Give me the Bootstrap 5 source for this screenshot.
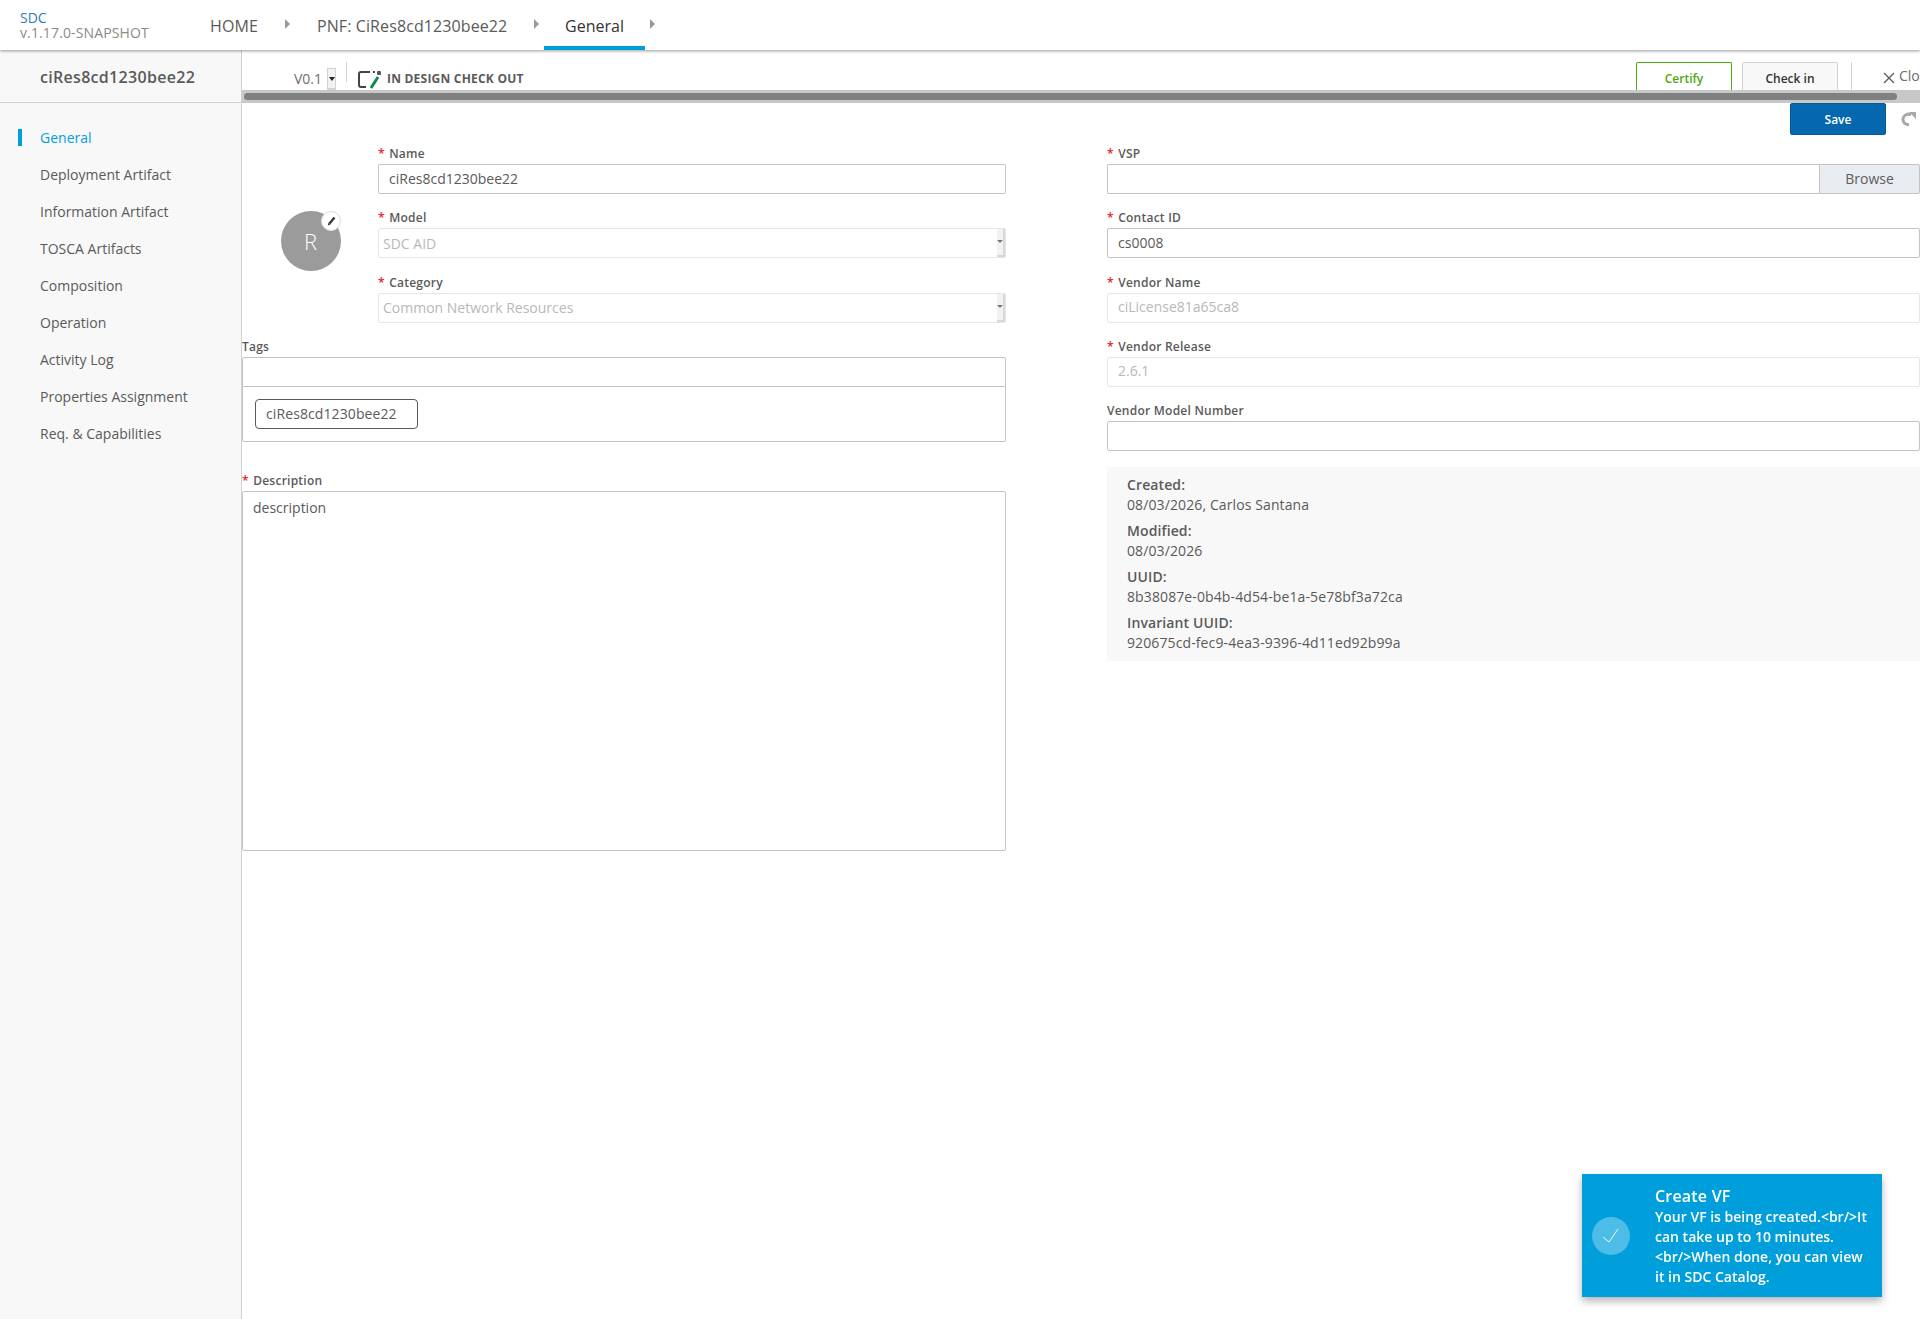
<!DOCTYPE html>
<html lang="en">
<head>
    <meta charset="UTF-8">
    <meta name="viewport" content="width=device-width, initial-scale=1.0">
    <title>SDC - General</title>
    <link href="https://cdn.jsdelivr.net/npm/bootstrap@5.3.0/dist/css/bootstrap.min.css" rel="stylesheet">
    <style>
        html, body { height: 100%; }
        body {
            font-family: "Open Sans", "Liberation Sans", sans-serif;
            font-size: 14px;
            color: #5a5a5a;
            overflow: hidden;
            background: #fff;
        }
        /* top bar */
        .top-bar {
            height: 50px;
            position: relative;
            z-index: 2;
            background: #fff;
            box-shadow: 0 1px 3px rgba(0, 0, 0, .4);
        }
        .brand-box { width: 190px; padding: 10px 0 0 20px; line-height: 15px; }
        .brand-name { color: #337ab7; font-size: 14px; line-height: 15px; }
        .brand-ver { color: #8a8a8a; font-size: 14px; letter-spacing: .13px; }
        .crumb {
            height: 50px;
            line-height: 52px;
            font-size: 16px;
            color: #5a5a5a;
            white-space: nowrap;
        }
        .crumb-home { width: 74px; margin-left: 20px; letter-spacing: .1px; }
        .crumb-pnf { width: 216px; margin-left: 25px; letter-spacing: .1px; }
        .crumb-on {
            width: 101px;
            margin-left: 3px;
            text-align: center;
            color: #333;
            border-bottom: 4px solid #009fdb;
        }
        .crumb-arrow { width: 8px; height: 12px; margin-top: 18px; }
        /* side nav */
        .side-nav {
            width: 242px;
            flex: none;
            background: #f8f8f8;
            border-right: 1px solid #d2d2d2;
        }
        .side-title {
            height: 53px;
            line-height: 54px;
            padding-left: 40px;
            font-size: 16px;
            font-weight: 600;
            letter-spacing: .3px;
            border-bottom: 1px solid #d2d2d2;
        }
        .side-list { padding-top: 16px; }
        .side-item { height: 37px; line-height: 37px; padding-left: 40px; position: relative; }
        .side-on { color: #009fdb; }
        .side-on::before {
            content: "";
            position: absolute;
            left: 18px;
            top: 10px;
            width: 4px;
            height: 17px;
            background: #009fdb;
        }
        /* toolbar */
        .main-area { flex: 1; min-width: 0; overflow: hidden; }
        .tool-row { height: 40px; padding-top: 12px; }
        .ver-text { margin-left: 52px; width: 33px; padding-top: 7px; line-height: 20px; color: #6d6d6d; }
        .ver-spin {
            width: 9px;
            height: 22px;
            margin-top: 6px;
            border: 1px solid #d2d2d2;
            border-bottom-width: 2px;
            background: #f2f2f2;
            position: relative;
        }
        .tri-down {
            position: absolute;
            left: 1px;
            top: 8px;
            border: 3px solid transparent;
            border-top: 4px solid #222;
            border-bottom: 0;
        }
        .tool-sep { width: 1px; background: #d2d2d2; height: 20px; margin: 0 10px; }
        .state-icon { margin-top: 8px; flex: none; }
        .state-text { font-size: 12px; font-weight: 700; letter-spacing: .22px; color: #5a5a5a; padding-top: 8px; line-height: 18px; margin-left: 5px; white-space: nowrap; }
        .btn-certify, .btn-checkin {
            width: 96px;
            height: 28px;
            font-size: 12px;
            font-weight: 600;
            text-align: center;
            line-height: 32px;
            border-radius: 2px 2px 0 0;
        }
        .btn-certify { color: #4ca90c; border: 1px solid #4ca90c; border-bottom: 0; background: #fff; }
        .btn-checkin { color: #333; border: 1px solid #d2d2d2; border-bottom: 0; background: #f8f8f8; margin-left: 10px; }
        .close-box { width: 69px; margin-left: 13px; border-left: 1px solid #d2d2d2; height: 28px; white-space: nowrap; overflow: hidden; padding-left: 47px; line-height: 28px; color: #6d6d6d; position: relative; }
        .close-x { position: absolute; left: 31px; top: 10px; }
        .scroll-track { height: 13px; background: #c8c8c8; padding: 3px 23px 0 2px; }
        .scroll-thumb { height: 6.5px; background: #7f8080; border-radius: 4px; }
        .save-row { height: 32px; position: relative; }
        .btn-save {
            width: 96px;
            height: 32px;
            padding: 2px 0 0;
            font-size: 12px;
            font-weight: 600;
            color: #fff;
            background: #0568ae;
            border: 1px solid #045c9c;
            border-radius: 2px;
            margin-right: 34px;
        }
        .redo-icon { position: absolute; right: 4px; top: 9px; }
        /* form */
        .form-wrap { margin-top: 9px; width: 1700px; }
        .left-side { width: 764px; flex: none; }
        .right-side { width: 813px; margin-left: 101px; flex: none; }
        .field-box { margin-bottom: 14.25px; }
        .field-lbl {
            display: block;
            font-size: 12px;
            font-weight: 600;
            letter-spacing: .24px;
            line-height: 18px;
            padding-top: 1px;
            height: 18px;
            margin-bottom: 2px;
            color: #5a5a5a;
        }
        .req { color: #e81b1b; margin-right: 1px; }
        .txt-input {
            height: 30px;
            padding: 0 10px 2px;
            font-size: 14px;
            color: #5a5a5a;
            border: 1px solid #c4c4c4;
            border-radius: 2px;
        }
        .txt-input:disabled {
            background: #fff;
            color: #b8b8b8;
            border-color: #e6e6e6;
            opacity: 1;
        }
        .sel-input { padding: 0 0 0 4px; }
        .sel-spin {
            position: absolute;
            right: 1px;
            top: 1px;
            width: 8px;
            height: 28px;
            background: #f2f2f2;
            border-right: 2px solid #d8d8d8;
            border-bottom: 2px solid #d8d8d8;
        }
        .sel-spin .tri-down { left: 0; top: 11px; border-width: 3px 3px 0; border-color: #777 transparent transparent; }
        .avatar-col { width: 136px; flex: none; padding: 67px 0 0 39px; }
        .avatar-round {
            width: 60px;
            height: 60px;
            border-radius: 50%;
            background: #9b9b9b;
            color: #fff;
            font-size: 22px;
            font-weight: 300;
            line-height: 60px;
            padding-right: 1px;
            text-align: center;
            position: relative;
        }
        .avatar-edit {
            position: absolute;
            right: 0;
            top: 0;
            width: 20px;
            height: 20px;
            border-radius: 50%;
            background: #fff;
            border: 1px solid #ddd;
            display: flex;
            align-items: center;
            justify-content: center;
        }
        .name-fields { width: 628px; flex: none; }
        .tags-list { height: 55px; border: 1px solid #c4c4c4; border-top: 0; border-radius: 0 0 2px 2px; padding: 12px 0 0 12px; margin-bottom: 29px; }
        .tag-chip {
            display: inline-block;
            width: 163px;
            height: 30px;
            line-height: 28px;
            padding-left: 10px;
            letter-spacing: .1px;
            border: 1px solid #5a5a5a;
            border-radius: 4px;
        }
        .desc-area { height: 360px; padding: 6px 10px; border: 1px solid #c4c4c4; border-radius: 2px; color: #5a5a5a; font-size: 14px; resize: none; line-height: 20px; }
        .browse-btn {
            width: 101px;
            height: 30px;
            padding: 0 0 2px;
            font-size: 14px;
            color: #5a5a5a;
            background: #e9edf2;
            border: 1px solid #c4c4c4;
            border-radius: 0 2px 2px 0;
        }
        .info-panel { margin-top: 16px; height: 194px; padding: 8px 20px; background: #f8f8f8; line-height: 20px; letter-spacing: .11px; }
        .info-group { margin-bottom: 6px; }
        .info-head { font-weight: 600; }
        /* toast */
        .vf-toast {
            position: fixed;
            left: 1582px;
            top: 1174px;
            width: 300px;
            height: 123px;
            padding: 11px 8px 0 73px;
            background: #009fdb;
            color: #fff;
            box-shadow: 0 4px 8px rgba(0, 0, 0, .3);
            line-height: 20px;
            font-weight: 600;
        }
        .vf-toast-title { font-size: 16px; font-weight: 600; letter-spacing: .2px; line-height: 22px; }
        .vf-check {
            position: absolute;
            left: 10px;
            top: 43px;
            width: 38px;
            height: 38px;
            border-radius: 50%;
            background: rgba(255, 255, 255, .3);
            display: flex;
            align-items: center;
            justify-content: center;
        }
    </style>
</head>

<body class="d-flex flex-column">
    <!-- top bar with breadcrumb -->
    <div class="top-bar d-flex flex-none">
        <div class="brand-box">
            <div class="brand-name">SDC</div>
            <div class="brand-ver">v.1.17.0-SNAPSHOT</div>
        </div>
        <div class="crumb crumb-home">HOME</div>
        <svg class="crumb-arrow" viewBox="0 0 8 12"><path d="M1 1 L6 6 L1 11 Z" fill="#999"/></svg>
        <div class="crumb crumb-pnf">PNF: CiRes8cd1230bee22</div>
        <svg class="crumb-arrow" viewBox="0 0 8 12"><path d="M1 1 L6 6 L1 11 Z" fill="#999"/></svg>
        <div class="crumb crumb-on">General</div>
        <svg class="crumb-arrow ms-1" viewBox="0 0 8 12"><path d="M1 1 L6 6 L1 11 Z" fill="#999"/></svg>
    </div>

    <div class="d-flex flex-grow-1" style="min-height:0">
        <!-- side nav -->
        <div class="side-nav">
            <div class="side-title">ciRes8cd1230bee22</div>
            <div class="side-list">
                <div class="side-item side-on">General</div>
                <div class="side-item">Deployment Artifact</div>
                <div class="side-item">Information Artifact</div>
                <div class="side-item">TOSCA Artifacts</div>
                <div class="side-item">Composition</div>
                <div class="side-item">Operation</div>
                <div class="side-item">Activity Log</div>
                <div class="side-item">Properties Assignment</div>
                <div class="side-item">Req. &amp; Capabilities</div>
            </div>
        </div>

        <div class="main-area">
            <!-- version and lifecycle toolbar -->
            <div class="tool-row d-flex">
                <div class="ver-text">V0.1</div>
                <div class="ver-spin"><span class="tri-down"></span></div>
                <div class="tool-sep"></div>
                <svg class="state-icon" width="25" height="19" viewBox="0 0 25 19">
                    <path d="M13 2 H4 Q2 2 2 4 V15 Q2 17 4 17 H9 M16 2 H17 V3" fill="none" stroke="#444" stroke-width="2"/>
                    <rect x="20" y="1" width="4" height="4" rx="1" fill="#555"/>
                    <path d="M21 7 L14 18" stroke="#0f8a4a" stroke-width="3"/>
                </svg>
                <div class="state-text">IN DESIGN CHECK OUT</div>
                <div class="ms-auto d-flex">
                    <div class="btn-certify">Certify</div>
                    <div class="btn-checkin">Check in</div>
                    <div class="close-box">
                        <svg class="close-x" width="12" height="12" viewBox="0 0 12 12"><path d="M1 1 L11 11 M11 1 L1 11" stroke="#5a5a5a" stroke-width="1.3"/></svg>
                        <span>Clo</span>
                    </div>
                </div>
            </div>
            <div class="scroll-track"><div class="scroll-thumb"></div></div>

            <div class="save-row d-flex justify-content-end">
                <button class="btn-save" type="button">Save</button>
                <svg class="redo-icon" width="15" height="14" viewBox="0 0 15 14"><path d="M8 12.5 A5.2 5.2 0 1 1 10 3" fill="none" stroke="#a8a8a8" stroke-width="3"/><path d="M8 0 L15 0 L15 7 Z" fill="#a8a8a8"/></svg>
            </div>

            <div class="form-wrap d-flex">
                <!-- left column -->
                <div class="left-side">
                    <div class="d-flex">
                        <div class="avatar-col">
                            <div class="avatar-round">R
                                <span class="avatar-edit">
                                    <svg width="11" height="11" viewBox="0 0 11 11"><path d="M8.5 1.5 L3.5 7.5" stroke="#333" stroke-width="2.2"/><path d="M2.6 6.6 L1.8 9.6 L4.6 8.5 Z" fill="#333"/></svg>
                                </span>
                            </div>
                        </div>
                        <div class="name-fields">
                            <div class="field-box">
                                <label class="field-lbl"><span class="req">*</span> Name</label>
                                <input class="form-control txt-input" value="ciRes8cd1230bee22">
                            </div>
                            <div class="field-box">
                                <label class="field-lbl"><span class="req">*</span> Model</label>
                                <div class="position-relative">
                                    <input class="form-control txt-input sel-input" value="SDC AID" disabled>
                                    <span class="sel-spin"><span class="tri-down"></span></span>
                                </div>
                            </div>
                            <div class="field-box">
                                <label class="field-lbl"><span class="req">*</span> Category</label>
                                <div class="position-relative">
                                    <input class="form-control txt-input sel-input" value="Common Network Resources" disabled>
                                    <span class="sel-spin"><span class="tri-down"></span></span>
                                </div>
                            </div>
                        </div>
                    </div>
                    <label class="field-lbl">Tags</label>
                    <input class="form-control txt-input rounded-bottom-0">
                    <div class="tags-list"><span class="tag-chip">ciRes8cd1230bee22</span></div>
                    <label class="field-lbl"><span class="req">*</span> Description</label>
                    <textarea class="form-control desc-area">description</textarea>
                </div>

                <!-- right column -->
                <div class="right-side">
                    <div class="field-box">
                        <label class="field-lbl"><span class="req">*</span> VSP</label>
                        <div class="d-flex">
                            <input class="form-control txt-input rounded-end-0 border-end-0">
                            <button class="browse-btn flex-shrink-0" type="button">Browse</button>
                        </div>
                    </div>
                    <div class="field-box">
                        <label class="field-lbl"><span class="req">*</span> Contact ID</label>
                        <input class="form-control txt-input" value="cs0008">
                    </div>
                    <div class="field-box">
                        <label class="field-lbl"><span class="req">*</span> Vendor Name</label>
                        <input class="form-control txt-input" value="ciLicense81a65ca8" disabled>
                    </div>
                    <div class="field-box">
                        <label class="field-lbl"><span class="req">*</span> Vendor Release</label>
                        <input class="form-control txt-input" value="2.6.1" disabled>
                    </div>
                    <div class="field-box">
                        <label class="field-lbl">Vendor Model Number</label>
                        <input class="form-control txt-input">
                    </div>
                    <div class="info-panel">
                        <div class="info-group"><div class="info-head">Created:</div><div>08/03/2026, Carlos Santana</div></div>
                        <div class="info-group"><div class="info-head">Modified:</div><div>08/03/2026</div></div>
                        <div class="info-group"><div class="info-head">UUID:</div><div>8b38087e-0b4b-4d54-be1a-5e78bf3a72ca</div></div>
                        <div class="info-group"><div class="info-head">Invariant UUID:</div><div>920675cd-fec9-4ea3-9396-4d11ed92b99a</div></div>
                    </div>
                </div>
            </div>
        </div>
    </div>

    <!-- notification -->
    <div class="vf-toast">
        <span class="vf-check">
            <svg width="18" height="16" viewBox="0 0 18 16"><path d="M1 9 L7 14 L16 1" fill="none" stroke="#fff" stroke-width=".9"/></svg>
        </span>
        <div class="vf-toast-title">Create VF</div>
        <div>Your VF is being created.&lt;br/&gt;It can take up to 10 minutes. &lt;br/&gt;When done, you can view it in SDC Catalog.</div>
    </div>

    <script src="https://cdn.jsdelivr.net/npm/bootstrap@5.3.0/dist/js/bootstrap.bundle.min.js"></script>
</body>
</html>
